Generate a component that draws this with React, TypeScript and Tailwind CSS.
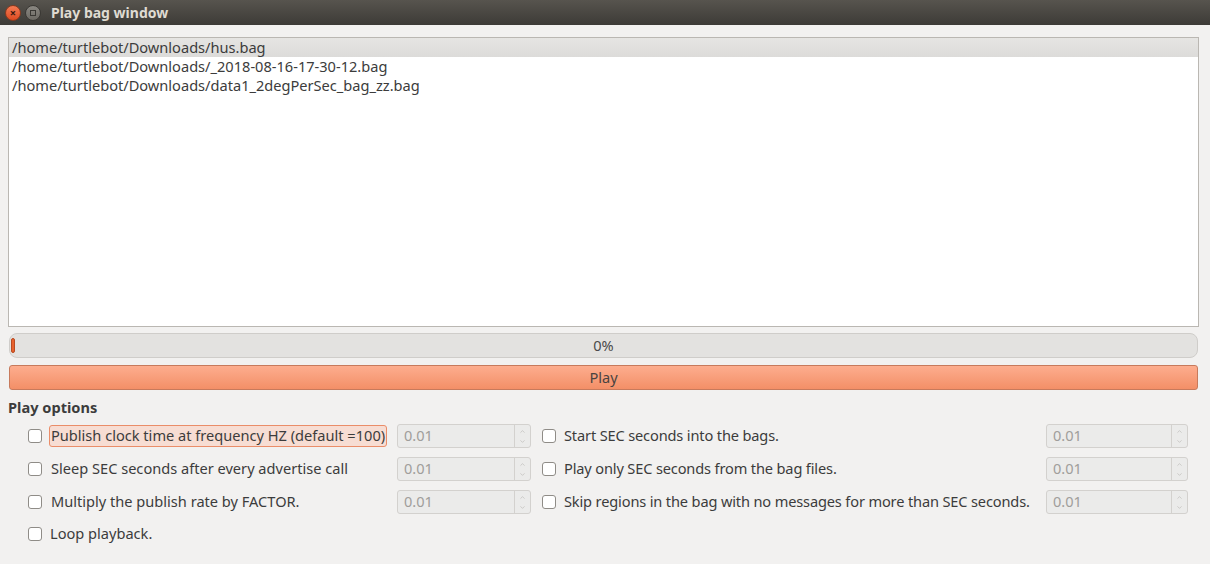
import { ChevronUp, ChevronDown } from "lucide-react";

const bags = [
  "/home/turtlebot/Downloads/hus.bag",
  "/home/turtlebot/Downloads/_2018-08-16-17-30-12.bag",
  "/home/turtlebot/Downloads/data1_2degPerSec_bag_zz.bag",
];

const rows = [
  { left: "Publish clock time at frequency HZ (default =100)", right: "Start SEC seconds into the bags.", focus: true },
  { left: "Sleep SEC seconds after every advertise call", right: "Play only SEC seconds from the bag files." },
  { left: "Multiply the publish rate by FACTOR.", right: "Skip regions in the bag with no messages for more than SEC seconds." },
];

function Check() {
  return <span className="block w-[14px] h-[14px] rounded-[3px] border border-[#8f8c87] bg-white shrink-0" />;
}

function Spin({ w }: { w: string }) {
  return (
    <div className={`${w} h-[24px] flex rounded-[3px] border border-[#d3d1ce] bg-[#ebebea]`}>
      <div className="flex-1 flex items-center pl-[6px] text-[#a09e9b]">0.01</div>
      <div className="w-[16px] border-l border-[#d3d1ce] flex flex-col items-center justify-center text-[#b5b3b0]">
        <ChevronUp size={7} strokeWidth={2} />
        <ChevronDown size={7} strokeWidth={2} className="mt-[3px]" />
      </div>
    </div>
  );
}

export default function App() {
  return (
    <div className="w-[1210px] h-[564px] bg-[#f2f1f0] text-[14.6px] text-[#3c3c3c] overflow-hidden" style={{ fontFamily: '"Noto Sans", sans-serif' }}>
      <div className="h-[25px] flex items-center bg-gradient-to-b from-[#57544e] to-[#3d3b37]">
        <span className="ml-[5px] w-[16px] h-[16px] rounded-full bg-gradient-to-b from-[#f47a52] to-[#dd4a1f] border border-[#8a3a1f] flex items-center justify-center text-[#3a1a10] text-[11px] leading-none font-bold">×</span>
        <span className="ml-[4px] w-[16px] h-[16px] rounded-full bg-gradient-to-b from-[#8a8781] to-[#6d6a64] border border-[#3a3834] flex items-center justify-center">
          <span className="block w-[6px] h-[6px] border border-[#3a3834]" />
        </span>
        <span className="ml-[10px] font-bold text-[#dfdbd2] text-[14px]">Play bag window</span>
      </div>

      <div className="pl-[8px] pr-[11px] pt-[12px] flex flex-col">
        <div className="h-[290px] bg-white border border-[#bab7b2]">
          {bags.map((b, i) => (
            <div
              key={b}
              className={`h-[19px] leading-[19px] pl-[3px] ${i === 0 ? "bg-gradient-to-b from-[#e6e5e3] to-[#dcdbd9]" : ""}`}
            >
              {b}
            </div>
          ))}
        </div>

        <div className="mt-[6px] mx-[1px] h-[25px] rounded-[8px] border border-[#cfcdca] bg-[#e3e2e0] relative flex items-center justify-center text-[#4a4a4a]">
          <span className="absolute left-[1px] top-[4px] w-[4px] h-[15px] rounded-[2px] bg-[#e8622e] border border-[#b94b22]" />
          0%
        </div>

        <div className="mt-[7px] mx-[1px] h-[25px] rounded-[3px] border border-[#c77a5c] bg-gradient-to-b from-[#fdad8e] to-[#f38f67] flex items-center justify-center text-[#4a4340]">
          Play
        </div>

        <div className="mt-[7px] font-bold text-[#3c3c3c]">Play options</div>

        <div className="mt-[1px] pl-[20px] grid grid-cols-[369px_134px_1fr_142px] pr-[11px]">
          {rows.map((r) => (
            <div key={r.left} className="contents">
              <div className="h-[33px] flex items-center">
                <Check />
                <span
                  className={`ml-[7px] px-[1px] h-[22px] flex items-center rounded-[3px] ${r.focus ? "bg-[#f7ddd3] border border-[#ea8d69]" : "border border-transparent"}`}
                >
                  {r.left}
                </span>
              </div>
              <div className="h-[33px] flex items-center">
                <Spin w="w-[134px]" />
              </div>
              <div className="h-[33px] flex items-center pl-[11px]">
                <Check />
                <span className="ml-[8px] tracking-[-0.15px]">{r.right}</span>
              </div>
              <div className="h-[33px] flex items-center">
                <Spin w="w-[142px]" />
              </div>
            </div>
          ))}
          <div className="h-[31px] flex items-center">
            <Check />
            <span className="ml-[8px]">Loop playback.</span>
          </div>
        </div>
      </div>
    </div>
  );
}
